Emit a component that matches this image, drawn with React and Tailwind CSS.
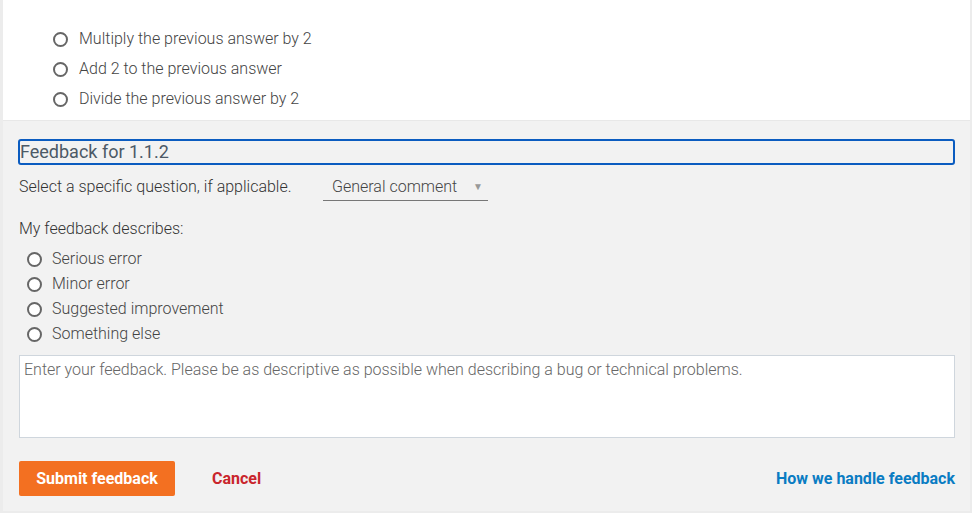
const answers = [
  "Multiply the previous answer by 2",
  "Add 2 to the previous answer",
  "Divide the previous answer by 2",
];

const kinds = ["Serious error", "Minor error", "Suggested improvement", "Something else"];

function Radio() {
  return <span className="block w-[15px] h-[15px] rounded-full border-2 border-[#666] bg-white shrink-0" />;
}

export default function App() {
  return (
    <div className="w-[974px] h-[515px] bg-white font-['Roboto',sans-serif] font-light text-[#444]">
      <div className="w-[972px] h-[513px] border-l-[3px] border-r-[2px] border-b-2 border-[#ececec] flex flex-col">
        {/* Question */}
        <div className="h-[121px] bg-white border-b border-[#e8e8e8] pt-[29px] pl-[50px] flex flex-col gap-[10px]">
          {answers.map((a) => (
            <label key={a} className="flex items-center gap-[11px] h-[20px] text-[16px]">
              <Radio />
              <span>{a}</span>
            </label>
          ))}
        </div>

        {/* Feedback panel */}
        <div className="flex-1 bg-[#f2f2f2] pl-[15px] pr-[15px] pt-[18px]">
          <div className="h-[26px] border-2 border-[#0b5cc0] rounded-[3px] flex items-center text-[18px] font-normal text-[#4c5966] leading-none">
            Feedback for 1.1.2
          </div>

          <div className="flex items-center mt-[8px] h-[28px] pl-px text-[16px] text-[#333]">
            <span className="w-[304px]">Select a specific question, if applicable.</span>
            <div className="w-[165px] h-[28px] border-b border-[#777] flex items-center justify-between pl-[9px] pr-[5px]">
              <span className="text-[#444]">General comment</span>
              <span className="text-[10px] text-[#999]">▼</span>
            </div>
          </div>

          <div className="mt-[18px] pl-px text-[16px] text-[#333] leading-[20px]">My feedback describes:</div>

          <div className="mt-[10px] pl-[9px] flex flex-col gap-[5px]">
            {kinds.map((k) => (
              <label key={k} className="flex items-center gap-[10px] h-[20px] text-[16px]">
                <Radio />
                <span>{k}</span>
              </label>
            ))}
          </div>

          <div className="mt-[11px] ml-px h-[83px] bg-white border border-[#cfd6dd] px-[4px] pt-[3px] text-[16px] text-[#666] leading-[22px]">
            Enter your feedback. Please be as descriptive as possible when describing a bug or technical problems.
          </div>

          <div className="mt-[23px] ml-px flex items-center">
            <button className="h-[35px] w-[156px] bg-[#f37021] rounded-[2px] text-white font-bold text-[16px]">
              Submit feedback
            </button>
            <span className="ml-[37px] font-bold text-[16px] text-[#c9252c]">Cancel</span>
            <span className="ml-auto font-bold text-[16px] text-[#0a7cc3]">How we handle feedback</span>
          </div>
        </div>
      </div>
    </div>
  );
}
